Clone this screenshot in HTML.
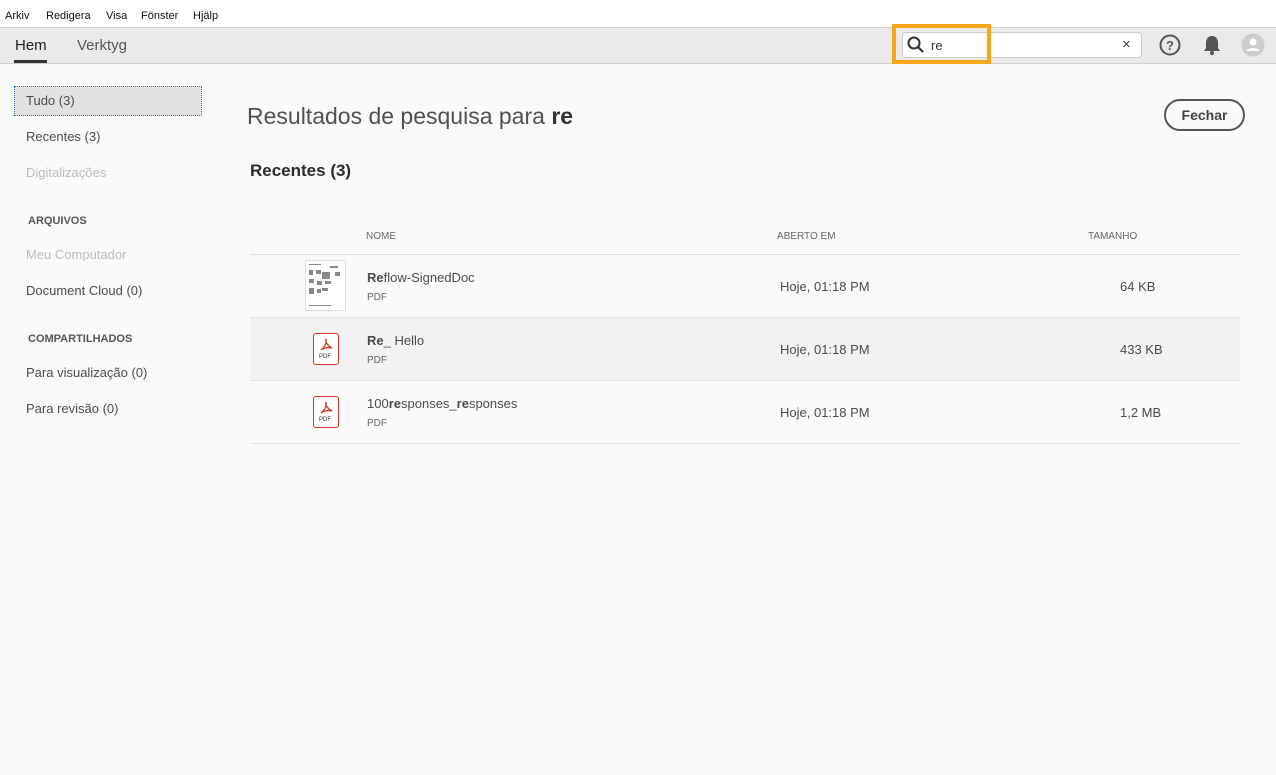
<!DOCTYPE html>
<html><head><style>
*{margin:0;padding:0;box-sizing:border-box}
body{width:1276px;height:775px;background:#fafafa;font-family:"Liberation Sans",sans-serif;color:#4b4b4b;position:relative;overflow:hidden}
.a{position:absolute;white-space:nowrap}
.menu{top:0;left:0;width:1276px;height:28px;background:#fff;border-bottom:1px solid #d0d0d0}
.menu span{position:absolute;top:10px;font-size:11px;color:#111}
.tb{top:28px;left:0;width:1276px;height:36px;background:#eaeaea;border-bottom:1px solid #cfcfcf}
.side{font-size:13px}
.row{left:250px;width:990px;height:63px;border-bottom:1px solid #e3e3e3}
.nm{font-size:13px;color:#4b4b4b}
.sm{font-size:10px;color:#666}
.pdf{width:26px;height:32px;border:1.5px solid #d4342c;border-radius:3px;background:#fff}
.pdf svg{position:absolute;left:6px;top:4px}
.pdf span{position:absolute;left:5px;top:20px;font-size:6px;color:#333}
</style></head><body>
<div class="a menu"><span style="left:5px">Arkiv</span><span style="left:46px">Redigera</span><span style="left:106px">Visa</span><span style="left:141px">Fönster</span><span style="left:193px">Hjälp</span></div>
<div class="a tb"></div>
<div class="a" style="left:15px;top:37px;font-size:15px;color:#222">Hem</div>
<div class="a" style="left:14px;top:60px;width:33px;height:3px;background:#333"></div>
<div class="a" style="left:77px;top:37px;font-size:15px;color:#555">Verktyg</div>
<div class="a" style="left:902px;top:32px;width:240px;height:26px;background:#fff;border:1px solid #ccc;border-radius:4px"></div>
<div class="a" style="left:892px;top:24px;width:99px;height:40px;border:4px solid #f7a51c"></div>
<svg class="a" style="left:906px;top:35px" width="20" height="20"><circle cx="8" cy="8" r="5.5" fill="none" stroke="#333" stroke-width="2"/><path d="M12 12l5 5" stroke="#333" stroke-width="2.2"/></svg>
<div class="a" style="left:931px;top:38px;font-size:13px;color:#333">re</div>
<div class="a" style="left:1122px;top:36px;font-size:15px;color:#444">×</div>
<svg class="a" style="left:1158px;top:33px" width="24" height="24"><circle cx="12" cy="12" r="9.5" fill="none" stroke="#555" stroke-width="2"/><text x="12" y="17" font-size="13" text-anchor="middle" font-weight="bold" fill="#555" font-family="Liberation Sans">?</text></svg>
<svg class="a" style="left:1201px;top:33px" width="22" height="24"><path d="M11 3c-4 0-6 3-6 7v5l-2 3h16l-2-3v-5c0-4-2-7-6-7z" fill="#555"/><circle cx="11" cy="20" r="2" fill="#555"/></svg>
<svg class="a" style="left:1241px;top:33px" width="24" height="24"><circle cx="12" cy="12" r="11.5" fill="#ccc"/><circle cx="12" cy="9" r="3.5" fill="#fff"/><path d="M5 18c2-4 12-4 14 0z" fill="#fff"/></svg>
<div class="a" style="left:14px;top:86px;width:188px;height:30px;background:#e2e2e2;border:1px dotted #2a6fcc"></div>
<div class="a side" style="left:26px;top:93px">Tudo (3)</div>
<div class="a side" style="left:26px;top:129px">Recentes (3)</div>
<div class="a side" style="left:26px;top:165px;color:#bbb">Digitalizações</div>
<div class="a" style="left:28px;top:215px;font-size:11px;font-weight:bold;color:#555">ARQUIVOS</div>
<div class="a side" style="left:26px;top:247px;color:#bbb">Meu Computador</div>
<div class="a side" style="left:26px;top:283px">Document Cloud (0)</div>
<div class="a" style="left:28px;top:333px;font-size:11px;font-weight:bold;color:#555">COMPARTILHADOS</div>
<div class="a side" style="left:26px;top:365px">Para visualização (0)</div>
<div class="a side" style="left:26px;top:401px">Para revisão (0)</div>
<div class="a" style="left:247px;top:103px;font-size:23px;color:#505050">Resultados de pesquisa para <b style="color:#333">re</b></div>
<div class="a" style="left:1164px;top:99px;width:81px;height:32px;border:2px solid #555;border-radius:16px;font-size:14px;font-weight:bold;color:#444;text-align:center;line-height:28px">Fechar</div>
<div class="a" style="left:250px;top:161px;font-size:17px;font-weight:bold;color:#2c2c2c">Recentes (3)</div>
<div class="a sm" style="left:366px;top:231px">NOME</div>
<div class="a sm" style="left:777px;top:231px">ABERTO EM</div>
<div class="a sm" style="left:1088px;top:231px">TAMANHO</div>
<div class="a" style="left:250px;top:254px;width:990px;height:1px;background:#ddd"></div>
<div class="a row" style="top:255px"></div>
<div class="a row" style="top:318px;background:#f2f2f2"></div>
<div class="a row" style="top:381px"></div>
<div class="a" style="left:305px;top:260px;width:41px;height:51px;background:#fff;border:1px solid #ddd">
<svg width="39" height="49"><g fill="#888"><rect x="3" y="3" width="12" height="1"/><rect x="24" y="5" width="8" height="2"/><rect x="3" y="9" width="4" height="5"/><rect x="10" y="9" width="5" height="4"/><rect x="16" y="11" width="8" height="7"/><rect x="29" y="11" width="5" height="4"/><rect x="3" y="18" width="5" height="4"/><rect x="11" y="20" width="5" height="4"/><rect x="19" y="20" width="6" height="3"/><rect x="3" y="27" width="5" height="6"/><rect x="11" y="28" width="4" height="4"/><rect x="16" y="27" width="6" height="3"/><rect x="3" y="44" width="22" height="1"/></g></svg></div>
<div class="a nm" style="left:367px;top:270px"><b>Re</b>flow-SignedDoc</div>
<div class="a sm" style="left:367px;top:292px">PDF</div>
<div class="a nm" style="left:780px;top:279px">Hoje, 01:18 PM</div>
<div class="a nm" style="left:1120px;top:279px">64 KB</div>
<div class="a pdf" style="left:313px;top:333px"><svg width="13" height="14"><path d="M6 1c-1 3 2 7 6 9M6 1c1 4-2 9-5 11M1 12c3-2 7-3 11-2" fill="none" stroke="#d4342c" stroke-width="1.3"/></svg><span>PDF</span></div>
<div class="a nm" style="left:367px;top:333px"><b>Re</b>_ Hello</div>
<div class="a sm" style="left:367px;top:355px">PDF</div>
<div class="a nm" style="left:780px;top:342px">Hoje, 01:18 PM</div>
<div class="a nm" style="left:1120px;top:342px">433 KB</div>
<div class="a pdf" style="left:313px;top:396px"><svg width="13" height="14"><path d="M6 1c-1 3 2 7 6 9M6 1c1 4-2 9-5 11M1 12c3-2 7-3 11-2" fill="none" stroke="#d4342c" stroke-width="1.3"/></svg><span>PDF</span></div>
<div class="a nm" style="left:367px;top:396px">100<b>re</b>sponses_<b>re</b>sponses</div>
<div class="a sm" style="left:367px;top:418px">PDF</div>
<div class="a nm" style="left:780px;top:405px">Hoje, 01:18 PM</div>
<div class="a nm" style="left:1120px;top:405px">1,2 MB</div>
</body></html>
